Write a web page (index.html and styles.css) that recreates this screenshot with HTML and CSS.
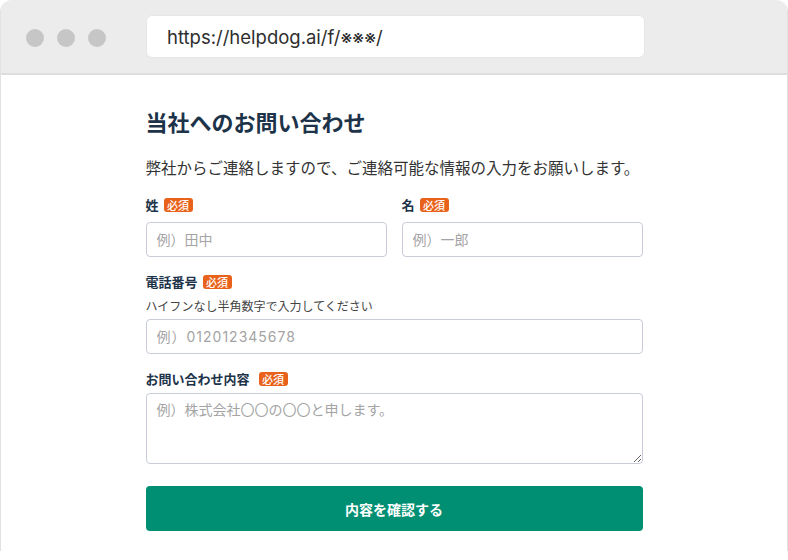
FILE: index.html
```html
<!DOCTYPE html>
<html lang="ja">
<head>
<meta charset="utf-8">
<title>当社へのお問い合わせ</title>
<link rel="stylesheet" href="styles.css">
</head>
<body>
<div class="window">
  <div class="titlebar">
    <div class="dots">
      <span class="dot"></span><span class="dot"></span><span class="dot"></span>
    </div>
    <div class="url">https://helpdog.ai/f/※※※/</div>
  </div>
  <div class="page">
    <form class="form">
      <h1 class="title">当社へのお問い合わせ</h1>
      <p class="lead">弊社からご連絡しますので、ご連絡可能な情報の入力をお願いします。</p>
      <div class="row">
        <div class="field">
          <label class="label">姓<span class="badge">必須</span></label>
          <input class="input input-name" type="text" placeholder="例）田中">
        </div>
        <div class="field">
          <label class="label">名<span class="badge">必須</span></label>
          <input class="input input-name" type="text" placeholder="例）一郎">
        </div>
      </div>
      <div class="field field-phone">
        <label class="label">電話番号<span class="badge">必須</span></label>
        <p class="hint">ハイフンなし半角数字で入力してください</p>
        <input class="input input-phone" type="text" placeholder="例）012012345678">
      </div>
      <div class="field field-message">
        <label class="label">お問い合わせ内容<span class="badge badge-wide">必須</span></label>
        <textarea class="input textarea" placeholder="例）株式会社〇〇の〇〇と申します。"></textarea>
      </div>
      <button class="submit" type="button">内容を確認する</button>
    </form>
  </div>
</div>
</body>
</html>
```
FILE: styles.css
```css
* { box-sizing: border-box; }
html, body { margin: 0; padding: 0; background: #ffffff; }
body {
  font-family: "Noto Sans CJK JP", "Noto Sans", sans-serif;
  color: #333;
}
.window {
  width: 788px;
  height: 551px;
  border-left: 1px solid #e2e2e2;
  border-right: 1px solid #e2e2e2;
  border-radius: 12px 12px 0 0;
  overflow: hidden;
  background: #fff;
}
.titlebar {
  height: 75px;
  background: #ececec;
  border-bottom: 2px solid #dedede;
  display: flex;
  align-items: center;
  padding-left: 25px;
}
.dots { display: flex; gap: 13px; margin-top: 2px; }
.dot {
  width: 18px; height: 18px; border-radius: 50%;
  background: #c6c6c6;
}
.url {
  margin-left: 41px;
  width: 497px;
  height: 41px;
  background: #fff;
  border-radius: 5px;
  box-shadow: 0 0 0 1px #e6e6e6;
  display: flex;
  align-items: center;
  padding-left: 20px;
  font-family: "Inter", "Noto Sans", sans-serif;
  font-size: 18.5px;
  color: #2e2e2e;
}
.page { display: flex; justify-content: center; }
.form {
  width: 497px;
  padding-top: 31px;
  display: flex;
  flex-direction: column;
}
.title {
  margin: 0;
  font-size: 22px;
  line-height: 30px;
  font-weight: 700;
  color: #1d3349;
}
.lead {
  margin: 20px 0 0;
  font-size: 15.5px;
  line-height: 22px;
  color: #333;
}
.row {
  margin-top: 18px;
  display: grid;
  grid-template-columns: 1fr 1fr;
  gap: 15px;
}
.field { display: flex; flex-direction: column; }
.label {
  display: flex;
  align-items: center;
  font-size: 13px;
  line-height: 18px;
  font-weight: 700;
  color: #1d3349;
}
.badge {
  margin-left: 5px;
  height: 14px;
  padding: 0 3.5px;
  border-radius: 3px;
  background: #e8621b;
  color: #fff;
  font-size: 11px;
  line-height: 14px;
  font-weight: 500;
}
.badge-wide { margin-left: 9px; }
.input {
  width: 100%;
  border: 1px solid #c7ccd8;
  border-radius: 4px;
  background: #fff;
  font-family: "Inter", "Noto Sans CJK JP", sans-serif;
  font-size: 14px;
  color: #333;
  padding: 0 10px;
  outline: none;
}
.input::placeholder { color: #a4a4a4; }
.input-name { height: 35px; margin-top: 8px; }
.field-phone { margin-top: 16px; }
.hint {
  margin: 6px 0 0;
  font-size: 12px;
  line-height: 18px;
  color: #444;
}
.input-phone { height: 35px; margin-top: 4px; letter-spacing: 1px; }
.field-message { margin-top: 16px; }
.textarea {
  height: 71px;
  margin-top: 5px;
  padding: 5px 10px;
  line-height: 22px;
  resize: vertical;
}
.submit {
  margin-top: 22px;
  height: 45px;
  border: none;
  border-radius: 4px;
  background: #008f72;
  color: #fff;
  font-family: "Noto Sans CJK JP", "Noto Sans", sans-serif;
  font-size: 14px;
  font-weight: 700;
  cursor: pointer;
}
```
